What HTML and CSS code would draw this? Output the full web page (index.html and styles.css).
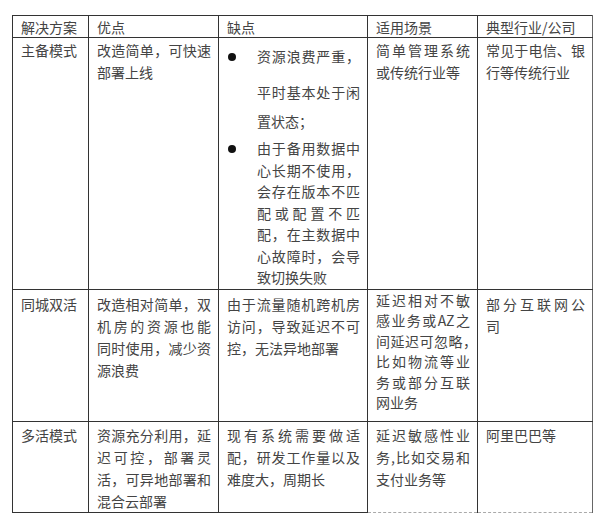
FILE: index.html
```html
<!DOCTYPE html>
<html lang="zh-CN">
<head>
<meta charset="utf-8">
<title>解决方案对比</title>
<link rel="stylesheet" href="styles.css">
</head>
<body>
<table class="t">
  <colgroup>
    <col class="c1"><col class="c2"><col class="c3"><col class="c4"><col class="c5">
  </colgroup>
  <thead>
    <tr class="h">
      <th>解决方案</th><th>优点</th><th>缺点</th><th>适用场景</th><th class="last">典型行业/公司</th>
    </tr>
  </thead>
  <tbody>
    <tr class="r1">
      <td><span class="ln">主备模式</span></td>
      <td><span class="ln">改造简单，可快速</span><span class="ln">部署上线</span></td>
      <td class="bul">
        <div class="it it1">
          <span class="mk"><i class="dot"></i></span>
          <div class="tx"><span class="ln a">资源浪费严重，</span><span class="ln b">平时基本处于闲</span><span class="ln c">置状态；</span></div>
        </div>
        <div class="it it2">
          <span class="mk"><i class="dot"></i></span>
          <div class="tx"><span class="ln">由于备用数据中</span><span class="ln">心长期不使用，</span><span class="ln">会存在版本不匹</span><span class="ln">配或配置不匹</span><span class="ln">配，在主数据中</span><span class="ln">心故障时，会导</span><span class="ln">致切换失败</span></div>
        </div>
      </td>
      <td><span class="ln">简单管理系统</span><span class="ln">或传统行业等</span></td>
      <td class="last"><span class="ln">常见于电信、银</span><span class="ln">行等传统行业</span></td>
    </tr>
    <tr class="r2">
      <td><span class="ln">同城双活</span></td>
      <td><span class="ln">改造相对简单，双</span><span class="ln">机房的资源也能</span><span class="ln">同时使用，减少资</span><span class="ln">源浪费</span></td>
      <td><span class="ln">由于流量随机跨机房</span><span class="ln">访问，导致延迟不可</span><span class="ln">控，无法异地部署</span></td>
      <td class="tight"><span class="ln">延迟相对不敏</span><span class="ln">感业务或AZ之</span><span class="ln">间延迟可忽略<span class="hw">，</span></span><span class="ln">比如物流等业</span><span class="ln">务或部分互联</span><span class="ln">网业务</span></td>
      <td class="last"><span class="ln">部分互联网公</span><span class="ln">司</span></td>
    </tr>
    <tr class="r3">
      <td><span class="ln">多活模式</span></td>
      <td><span class="ln">资源充分利用，延</span><span class="ln">迟可控，部署灵</span><span class="ln">活，可异地部署和</span><span class="ln">混合云部署</span></td>
      <td><span class="ln">现有系统需要做适</span><span class="ln">配，研发工作量以及</span><span class="ln">难度大，周期长</span></td>
      <td class="dash"><span class="ln">延迟敏感性业</span><span class="ln">务,比如交易和</span><span class="ln">支付业务等</span></td>
      <td class="dash last"><span class="ln">阿里巴巴等</span></td>
    </tr>
  </tbody>
</table>
</body>
</html>
```

FILE: styles.css
```css
html, body {
  margin: 0;
  padding: 0;
  background: #ffffff;
}

body {
  font-family: "Noto Sans CJK SC", sans-serif;
  font-size: 14px;
  font-weight: 400;
  color: #444444;
}

.t {
  border-collapse: collapse;
  table-layout: fixed;
  width: 581px;
  margin: 15px 0 0 12px;
}

.c1 { width: 76px; }
.c2 { width: 130px; }
.c3 { width: 149px; }
.c4 { width: 110px; }
.c5 { width: 115px; }

th, td {
  border: 1px solid #333333;
  vertical-align: top;
  text-align: left;
  font-weight: 400;
  padding: 0 7px 0 8px;
  line-height: 22px;
}

th.last, td.last {
  border-right: 1px solid #666666;
}

.h { height: 21px; }
.h th { line-height: 20px; padding-top: 1px; }

.r1 { height: 250px; }
.r1 td { padding-top: 1px; }

.r2 { height: 132px; }
.r2 td { padding-top: 3px; }
.r2 td.tight { padding-top: 0; line-height: 20.5px; }

.r3 { height: 89px; }
.r3 td { padding-top: 2px; }
.r3 td.dash { border-bottom: 1px dashed #aaaaaa; }

.ln {
  display: block;
  white-space: nowrap;
  text-align: justify;
}

.ln:not(:last-child) {
  text-align-last: justify;
}

.hw {
  font-feature-settings: "halt" 1;
}

/* bullet list in the 缺点 cell */
.it {
  display: flex;
}

.mk {
  flex: none;
  width: 30px;
  display: flex;
  align-items: center;
  padding-left: 1px;
  box-sizing: border-box;
}

.it1 .mk { height: 35px; }
.it2 .mk { height: 21.5px; }

.dot {
  display: block;
  width: 8px;
  height: 8px;
  border-radius: 50%;
  background: #111111;
}

.tx {
  flex: 1;
  min-width: 0;
}

.it1 .a { line-height: 35px; }
.it1 .b { line-height: 36px; }
.it1 .c { line-height: 22px; }

.it2 {
  margin-top: 6px;
}

.it2 .ln { line-height: 21.5px; }
```
